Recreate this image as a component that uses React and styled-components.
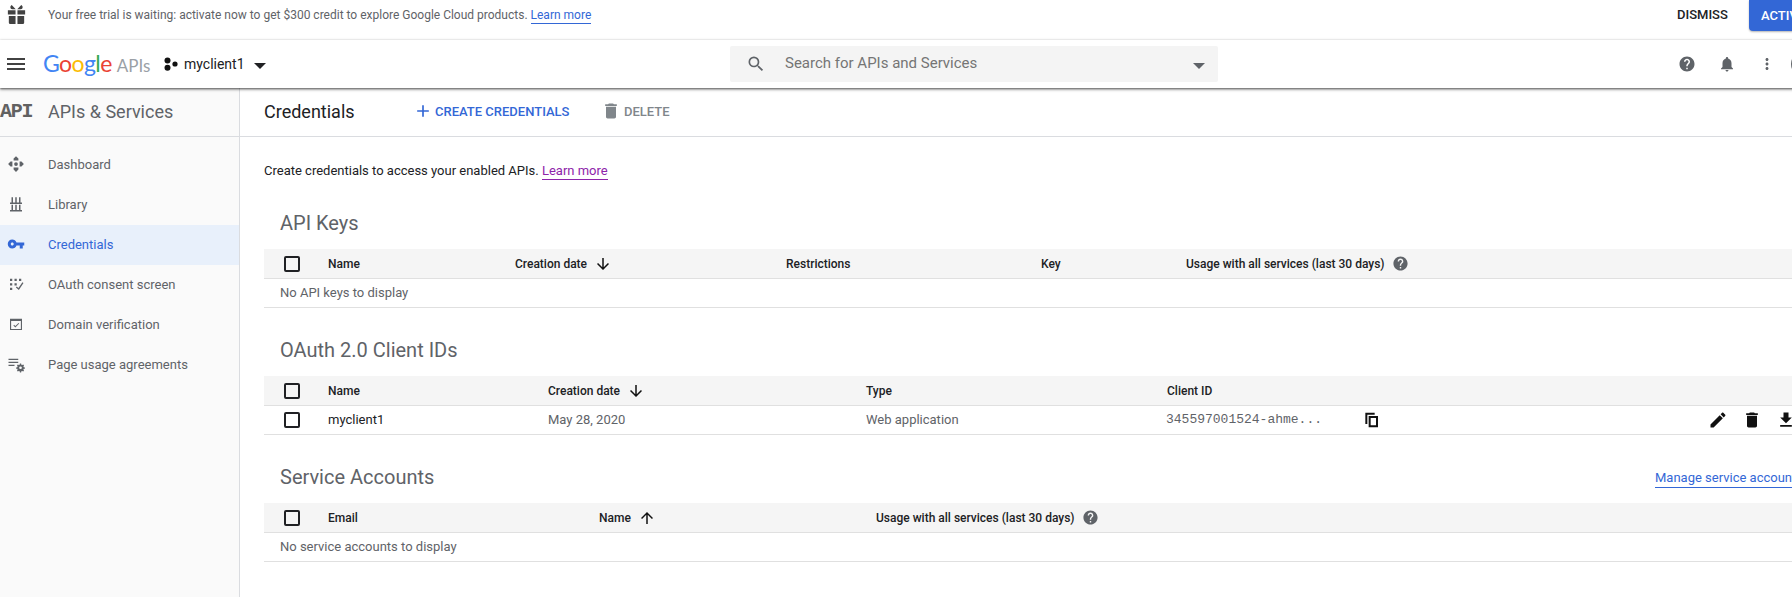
import React from 'react';
import styled, { createGlobalStyle } from 'styled-components';

const GlobalStyle = createGlobalStyle`
  html, body {
    margin: 0;
    height: 100%;
    overflow: hidden;
    background: #fff;
  }
  body {
    font-family: Roboto, "Liberation Sans", sans-serif;
    font-size: 13px;
    color: #5f6368;
  }
`;

const Page = styled.div`
  width: 1836px;
  height: 597px;
  display: flex;
  flex-direction: column;
`;

const Banner = styled.div`
  height: 40px;
  flex: none;
  display: flex;
  align-items: flex-start;
`;

const BannerIcon = styled.div`
  width: 48px;
  flex: none;
  padding: 3px 0 0 5px;
  box-sizing: border-box;
  line-height: 0;
`;

const BannerText = styled.div`
  font-size: 12px;
  line-height: 16px;
  padding-top: 7px;
  flex: none;
  width: 1629px;
`;

const LinkText = styled.a`
  color: ${(p) => p.$color || '#3367d6'};
  border-bottom: 1px solid ${(p) => p.$color || '#3367d6'};
  padding-bottom: 1px;
`;

const Dismiss = styled.div`
  font-weight: 500;
  color: #202124;
  width: 72px;
  flex: none;
  line-height: 16px;
  padding-top: 7px;
`;

const ActivateButton = styled.div`
  height: 31px;
  flex: none;
  background: #3367d6;
  border-radius: 0 0 0 4px;
  color: #fff;
  font-weight: 500;
  padding: 0 12px;
  display: flex;
  align-items: center;
  box-shadow: 0 1px 2px rgba(0, 0, 0, 0.3);
`;

const TopBar = styled.div`
  height: 48px;
  flex: none;
  display: grid;
  grid-template-columns: 730px 488px 1fr;
  align-items: center;
  background: #fff;
  position: relative;
  z-index: 2;
  box-shadow: 0 -1px 2px rgba(0, 0, 0, 0.06), 0 1px 2px rgba(0, 0, 0, 0.55), 0 2px 3px rgba(0, 0, 0, 0.2);
`;

const BarLeft = styled.div`
  display: flex;
  align-items: center;
`;

const MenuSlot = styled.div`
  width: 43px;
  flex: none;
  padding-left: 4px;
  box-sizing: border-box;
  line-height: 0;
`;

const Logo = styled.div`
  font-family: Lato, Roboto, sans-serif;
  font-size: 23px;
  letter-spacing: -0.6px;
  width: 121px;
  flex: none;
  margin-top: -3px;
  white-space: nowrap;
`;

const LogoLetter = styled.span`
  color: ${(p) => p.$color};
`;

const LogoApis = styled.span`
  color: #9aa0a6;
  margin-left: 5px;
  font-size: 17px;
  letter-spacing: 0;
`;

const ProjectName = styled.span`
  font-size: 14px;
  color: #202124;
  margin: 0 9px 0 6px;
`;

const Caret = styled.span`
  width: 0;
  height: 0;
  display: block;
  border-left: 6.5px solid transparent;
  border-right: 6.5px solid transparent;
  border-top: 6.5px solid ${(p) => p.$color};
  margin-top: 3px;
`;

const SearchBox = styled.div`
  height: 36px;
  background: #f4f4f4;
  border-radius: 2px;
  display: flex;
  align-items: center;
  padding: 0 13px 0 16px;
`;

const SearchText = styled.div`
  flex: 1;
  font-size: 15px;
  color: #757575;
  margin: 0 0 2px 19px;
`;

const BarRight = styled.div`
  display: flex;
  align-items: center;
  padding-left: 449px;
`;

const BarButton = styled.div`
  width: 40px;
  height: 40px;
  flex: none;
  display: flex;
  align-items: center;
  justify-content: center;
`;

const Avatar = styled.div`
  width: 24px;
  height: 24px;
  flex: none;
  margin-left: 4px;
  border-radius: 50%;
  background: #5f6368;
`;

const Body = styled.div`
  flex: 1;
  display: flex;
  min-height: 0;
`;

const Sidebar = styled.nav`
  width: 240px;
  flex: none;
  box-sizing: border-box;
  background: #fafafa;
  border-right: 1px solid #dadce0;
`;

const SideHeader = styled.div`
  height: 49px;
  box-sizing: border-box;
  border-bottom: 1px solid #dadce0;
  padding-bottom: 2px;
  display: flex;
  align-items: center;
  margin-bottom: 8px;
`;

const ApiMark = styled.span`
  font-family: "Liberation Mono", monospace;
  font-weight: 700;
  font-size: 20px;
  letter-spacing: -1.2px;
  width: 48px;
  flex: none;
  color: #616161;
`;

const SideTitle = styled.span`
  font-size: 18px;
  color: #5f6368;
`;

const SideItem = styled.div`
  height: 40px;
  box-sizing: border-box;
  padding: 0 0 2px 7px;
  display: flex;
  align-items: center;
  background: ${(p) => (p.$active ? '#e8f0fb' : 'transparent')};
  color: ${(p) => (p.$active ? '#3367d6' : '#5f6368')};
`;

const SideIcon = styled.span`
  width: 41px;
  flex: none;
  line-height: 0;
`;

const Main = styled.main`
  flex: 1;
  min-width: 0;
`;

const SubHeader = styled.div`
  height: 49px;
  box-sizing: border-box;
  border-bottom: 1px solid #dadce0;
  padding: 0 0 2px 24px;
  display: flex;
  align-items: center;
`;

const PageTitle = styled.h1`
  margin: 0;
  width: 149px;
  flex: none;
  font-size: 18px;
  font-weight: 400;
  color: #202124;
`;

const ToolButton = styled.div`
  display: flex;
  align-items: center;
  gap: ${(p) => p.$gap}px;
  font-weight: 500;
  color: ${(p) => p.$color};
  width: ${(p) => p.$width}px;
  flex: none;
`;

const Content = styled.div`
  padding-left: 24px;
`;

const Intro = styled.p`
  margin: 0;
  padding: 26px 0 2px;
  line-height: 16px;
  color: #202124;
`;

const SectionHead = styled.div`
  display: flex;
  justify-content: space-between;
  padding: 30px 33px 14px 16px;
  line-height: 24px;
`;

const SectionTitle = styled.h2`
  margin: 0;
  font-size: 20px;
  font-weight: 400;
  color: #5f6368;
`;

const ManageLink = styled(LinkText)`
  align-self: center;
  line-height: 16px;
  margin-top: 3px;
`;

const Row = styled.div`
  display: grid;
  grid-template-columns: ${(p) => p.$cols};
  align-items: center;
  height: ${(p) => (p.$head ? 29 : 27)}px;
  padding-bottom: ${(p) => (p.$head ? 0 : 1)}px;
  box-sizing: content-box;
  background: ${(p) => (p.$head ? '#f5f5f5' : 'transparent')};
  border-bottom: 1px solid #e0e0e0;
  color: ${(p) => (p.$head ? '#202124' : '#5f6368')};
  font-size: ${(p) => (p.$head ? 12 : 13)}px;
  font-weight: ${(p) => (p.$head ? 500 : 400)};
`;

const EmptyRow = styled(Row)`
  padding-left: 16px;
`;

const CheckCell = styled.div`
  padding-left: 20px;
  line-height: 0;
`;

const Checkbox = styled.span`
  display: block;
  width: 12px;
  height: 12px;
  border: 2px solid #202124;
  border-radius: 2px;
`;

const HeadCell = styled.div`
  display: flex;
  align-items: center;
  gap: 7px;
  white-space: nowrap;
`;

const NameCell = styled.div`
  color: #202124;
`;

const ClientCell = styled.div`
  display: flex;
  align-items: center;
`;

const ClientId = styled.span`
  font-family: "Liberation Mono", monospace;
  width: 198px;
  margin-left: -1px;
  flex: none;
`;

const RowActions = styled.div`
  display: flex;
  gap: 14px;
`;

const Svg = styled.svg`
  width: ${(p) => p.$size}px;
  height: ${(p) => p.$size}px;
  fill: ${(p) => p.$color || 'currentColor'};
  flex: none;
  display: block;
`;

const Icon = ({ d, size = 18, color, children }) => (
  <Svg viewBox="0 0 24 24" $size={size} $color={color}>
    {d && <path d={d} />}
    {children}
  </Svg>
);

const paths = {
  menu: 'M3 18h18v-2H3v2zm0-5h18v-2H3v2zm0-7v2h18V6H3z',
  search:
    'M15.5 14h-.79l-.28-.27A6.471 6.471 0 0 0 16 9.5 6.5 6.5 0 1 0 9.5 16c1.61 0 3.09-.59 4.23-1.57l.27.28v.79l5 4.99L20.49 19l-4.99-5zm-6 0C7.01 14 5 11.99 5 9.5S7.01 5 9.5 5 14 7.01 14 9.5 11.99 14 9.5 14z',
  help: 'M12 2C6.48 2 2 6.48 2 12s4.48 10 10 10 10-4.48 10-10S17.52 2 12 2zm1 17h-2v-2h2v2zm2.07-7.75l-.9.92C13.45 12.9 13 13.5 13 15h-2v-.5c0-1.1.45-2.1 1.17-2.83l1.24-1.26c.37-.36.59-.86.59-1.41 0-1.1-.9-2-2-2s-2 .9-2 2H8c0-2.21 1.79-4 4-4s4 1.79 4 4c0 .88-.36 1.68-.93 2.25z',
  bell: 'M12 22c1.1 0 2-.9 2-2h-4c0 1.1.89 2 2 2zm6-6v-5c0-3.07-1.64-5.64-4.5-6.32V4c0-.83-.67-1.5-1.5-1.5s-1.5.67-1.5 1.5v.68C7.63 5.36 6 7.92 6 11v5l-2 2v1h16v-1l-2-2z',
  more: 'M12 8c1.1 0 2-.9 2-2s-.9-2-2-2-2 .9-2 2 .9 2 2 2zm0 2c-1.1 0-2 .9-2 2s.9 2 2 2 2-.9 2-2-.9-2-2-2zm0 6c-1.1 0-2 .9-2 2s.9 2 2 2 2-.9 2-2-.9-2-2-2z',
  trash: 'M6 19c0 1.1.9 2 2 2h8c1.1 0 2-.9 2-2V7H6v12zM19 4h-3.5l-1-1h-5l-1 1H5v2h14V4z',
  add: 'M19 13h-6v6h-2v-6H5v-2h6V5h2v6h6v2z',
  down: 'M20 12l-1.41-1.41L13 16.17V4h-2v12.17l-5.58-5.59L4 12l8 8 8-8z',
  up: 'M4 12l1.41 1.41L11 7.83V20h2V7.83l5.58 5.59L20 12l-8-8-8 8z',
  edit: 'M3 17.25V21h3.75L17.81 9.94l-3.75-3.75L3 17.25zM20.71 7.04c.39-.39.39-1.02 0-1.41l-2.34-2.34c-.39-.39-1.02-.39-1.41 0l-1.83 1.83 3.75 3.75 1.83-1.83z',
  download: 'M19 9h-4V3H9v6H5l7 7 7-7zM5 18v2h14v-2H5z',
  copy: 'M16 1H2v17h3V4h11zM7 6h14v17H7zM10 9v11h8V9z',
  key: 'M12.65 10C11.83 7.67 9.61 6 7 6c-3.31 0-6 2.69-6 6s2.69 6 6 6c2.61 0 4.83-1.67 5.65-4H17v4h4v-4h2v-4H12.65zM7 14c-1.1 0-2-.9-2-2s.9-2 2-2 2 .9 2 2-.9 2-2 2z',
  gift: 'M3 7.5h8V12H3zM13 7.5h8V12h-8zM4 13.5h7V22H5.5A1.5 1.5 0 0 1 4 20.5zM13 13.5h7v7a1.5 1.5 0 0 1-1.5 1.5H13zM7 2l4.2 4.5H7.6C6.4 6.5 5.6 5.6 5.6 4.4c0-1 .5-1.9 1.4-2.4zM17 2c.9.5 1.4 1.4 1.4 2.4 0 1.2-.8 2.1-2 2.1h-3.6z',
  dashboard: 'M12 1.5l3.2 3.2v2.5H8.8V4.7zM12 22.5l-3.2-3.2v-2.5h6.4v2.5zM1.5 12l3.2-3.2h2.5v6.4H4.7zM22.5 12l-3.2 3.2h-2.5V8.8h2.5zM12 9.5a2.5 2.5 0 1 1 0 5 2.5 2.5 0 0 1 0-5z',
  library: 'M6 3h2v7H6zM11 3h2v7h-2zM16 3h2v7h-2zM4 10h16v2H4zM6 13h2v7H6zM11 13h2v7h-2zM16 13h2v7h-2zM4 20h16v2H4z',
  oauth: 'M4 5h3v3H4zM10 5h3v3h-3zM16 5h3v3h-3zM4 11h3v3H4zM10 11h3v3h-3zM4 17h3v3H4zM20.5 9.5l1.5 1.1L15.8 20l-4-3.2 1.2-1.5 2.3 1.9z',
  domain: 'M4 5h16v15H4zM5.5 8v10.5h13V8zM15.4 10.5l.9.9-5.2 5.2-2.6-2.6.9-.9 1.7 1.7z',
  usage: 'M2 5h13v1.5H2zM2 9h13v1.5H2zM2 13h8v1.5H2z',
  gear: 'M17 9.5l.4 2 1.4.6 1.8-1 1.6 1.6-1.1 1.7.6 1.5 2 .4v2.2l-2 .4-.6 1.5 1.1 1.7-1.6 1.6-1.7-1.1-1.5.6-.4 2h-2.2l-.4-2-1.5-.6-1.7 1.1-1.6-1.6 1.1-1.7-.6-1.5-2-.4v-2.2l2-.4.6-1.5-1.1-1.7 1.6-1.6 1.8 1 1.4-.6.4-2zM15.9 14.5a2.4 2.4 0 1 0 0 4.8 2.4 2.4 0 0 0 0-4.8z',
};

const googleLetters = [
  ['G', '#4285f4'],
  ['o', '#ea4335'],
  ['o', '#fbbc05'],
  ['g', '#4285f4'],
  ['l', '#34a853'],
  ['e', '#ea4335'],
];

const sideItems = [
  ['Dashboard', <Icon key="d" d={paths.dashboard} color="#5f6368" />],
  ['Library', <Icon key="l" d={paths.library} color="#5f6368" />],
  ['Credentials', <Icon key="c" d={paths.key} color="#3367d6" />, true],
  ['OAuth consent screen', <Icon key="o" d={paths.oauth} color="#5f6368" />],
  ['Domain verification', <Icon key="v" d={paths.domain} color="#5f6368" />],
  [
    'Page usage agreements',
    <Icon key="p" color="#5f6368">
      <path d={paths.usage} />
      <path d={paths.gear} transform="translate(6.1 4.3) scale(.75)" />
    </Icon>,
  ],
];

const apiCols = '64px 187px 271px 255px 145px 1fr';
const oauthCols = '64px 220px 318px 301px 541px 1fr';
const serviceCols = '64px 271px 277px 1fr';

const Check = () => (
  <CheckCell>
    <Checkbox />
  </CheckCell>
);

const App = () => (
  <Page>
    <GlobalStyle />
    <Banner>
      <BannerIcon>
        <Icon d={paths.gift} size={23} color="#424242" />
      </BannerIcon>
      <BannerText>
        Your free trial is waiting: activate now to get $300 credit to explore Google Cloud products.{' '}
        <LinkText>Learn more</LinkText>
      </BannerText>
      <Dismiss>DISMISS</Dismiss>
      <ActivateButton>ACTIVATE</ActivateButton>
    </Banner>

    <TopBar>
      <BarLeft>
        <MenuSlot>
          <Icon d={paths.menu} size={24} color="#424242" />
        </MenuSlot>
        <Logo>
          {googleLetters.map(([letter, color], i) => (
            <LogoLetter key={i} $color={color}>
              {letter}
            </LogoLetter>
          ))}
          <LogoApis>APIs</LogoApis>
        </Logo>
        <Svg viewBox="0 0 14 14" $size={14} $color="#111">
          <circle cx="3.5" cy="3.5" r="3" />
          <circle cx="3.5" cy="10.8" r="3" />
          <circle cx="11" cy="7" r="2.6" />
        </Svg>
        <ProjectName>myclient1</ProjectName>
        <Caret $color="#202124" />
      </BarLeft>
      <SearchBox>
        <Icon d={paths.search} size={20} color="#5f6368" />
        <SearchText>Search for APIs and Services</SearchText>
        <Caret $color="#5f6368" />
      </SearchBox>
      <BarRight>
        <BarButton>
          <Icon d={paths.help} color="#5f6368" />
        </BarButton>
        <BarButton>
          <Icon d={paths.bell} color="#5f6368" />
        </BarButton>
        <BarButton>
          <Icon d={paths.more} color="#5f6368" />
        </BarButton>
        <Avatar />
      </BarRight>
    </TopBar>

    <Body>
      <Sidebar>
        <SideHeader>
          <ApiMark>API</ApiMark>
          <SideTitle>APIs &amp; Services</SideTitle>
        </SideHeader>
        {sideItems.map(([label, icon, active]) => (
          <SideItem key={label} $active={active}>
            <SideIcon>{icon}</SideIcon>
            {label}
          </SideItem>
        ))}
      </Sidebar>

      <Main>
        <SubHeader>
          <PageTitle>Credentials</PageTitle>
          <ToolButton $color="#3367d6" $width={188} $gap={2}>
            <Icon d={paths.add} size={20} color="#3367d6" />
            CREATE CREDENTIALS
          </ToolButton>
          <ToolButton $color="#80868b" $width={100} $gap={3}>
            <Icon d={paths.trash} size={20} color="#80868b" />
            DELETE
          </ToolButton>
        </SubHeader>

        <Content>
          <Intro>
            Create credentials to access your enabled APIs. <LinkText $color="#8e24aa">Learn more</LinkText>
          </Intro>

          <SectionHead>
            <SectionTitle>API Keys</SectionTitle>
          </SectionHead>
          <Row $head $cols={apiCols}>
            <Check />
            <HeadCell>Name</HeadCell>
            <HeadCell>
              Creation date
              <Icon d={paths.down} color="#111" />
            </HeadCell>
            <HeadCell>Restrictions</HeadCell>
            <HeadCell>Key</HeadCell>
            <HeadCell>
              Usage with all services (last 30 days)
              <Icon d={paths.help} size={17} color="#5f6368" />
            </HeadCell>
          </Row>
          <EmptyRow $cols="1fr">No API keys to display</EmptyRow>

          <SectionHead>
            <SectionTitle>OAuth 2.0 Client IDs</SectionTitle>
          </SectionHead>
          <Row $head $cols={oauthCols}>
            <Check />
            <HeadCell>Name</HeadCell>
            <HeadCell>
              Creation date
              <Icon d={paths.down} color="#111" />
            </HeadCell>
            <HeadCell>Type</HeadCell>
            <HeadCell>Client ID</HeadCell>
          </Row>
          <Row $cols={oauthCols}>
            <Check />
            <NameCell>myclient1</NameCell>
            <div>May 28, 2020</div>
            <div>Web application</div>
            <ClientCell>
              <ClientId>345597001524-ahme...</ClientId>
              <Icon d={paths.copy} size={16} color="#111" />
            </ClientCell>
            <RowActions>
              <Icon d={paths.edit} size={20} color="#111" />
              <Icon d={paths.trash} size={20} color="#111" />
              <Icon d={paths.download} size={20} color="#111" />
            </RowActions>
          </Row>

          <SectionHead>
            <SectionTitle>Service Accounts</SectionTitle>
            <ManageLink>Manage service accounts</ManageLink>
          </SectionHead>
          <Row $head $cols={serviceCols}>
            <Check />
            <HeadCell>Email</HeadCell>
            <HeadCell>
              Name
              <Icon d={paths.up} color="#111" />
            </HeadCell>
            <HeadCell>
              Usage with all services (last 30 days)
              <Icon d={paths.help} size={17} color="#5f6368" />
            </HeadCell>
          </Row>
          <EmptyRow $cols="1fr">No service accounts to display</EmptyRow>
        </Content>
      </Main>
    </Body>
  </Page>
);

export default App;
